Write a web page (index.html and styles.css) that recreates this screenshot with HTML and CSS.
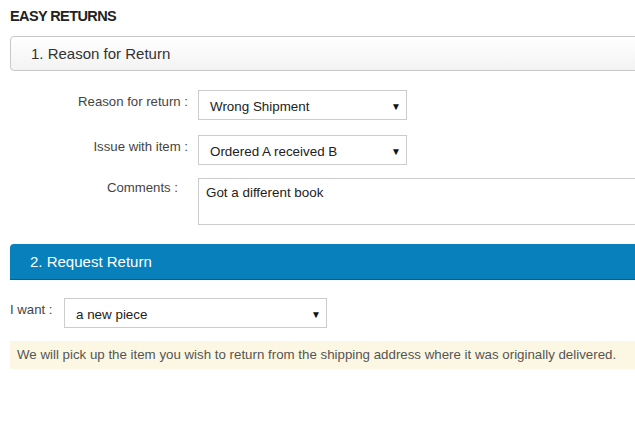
FILE: index.html
```html
<!DOCTYPE html>
<html>
<head>
<meta charset="utf-8">
<link rel="stylesheet" href="styles.css">
</head>
<body>
<div class="page">
  <h1 class="title">EASY RETURNS</h1>
  <div class="panel-head">1. Reason for Return</div>
  <div class="form">
    <div class="row">
      <div class="label">Reason for return :</div>
      <div class="select"><span>Wrong Shipment</span><span class="arrow">▼</span></div>
    </div>
    <div class="row">
      <div class="label">Issue with item :</div>
      <div class="select"><span>Ordered A received B</span><span class="arrow">▼</span></div>
    </div>
    <div class="row">
      <div class="label comments">Comments :</div>
      <div class="textarea">Got a different book</div>
    </div>
  </div>
  <div class="panel-head active">2. Request Return</div>
  <div class="want-row">
    <div class="want-label">I want :</div>
    <div class="select wide"><span>a new piece</span><span class="arrow">▼</span></div>
  </div>
  <div class="notice">We will pick up the item you wish to return from the shipping address where it was originally delivered.</div>
</div>
</body>
</html>
```
FILE: styles.css
```css
html, body { margin: 0; padding: 0; background: #fff; overflow: hidden; }
body { font-family: "Liberation Sans", Arial, sans-serif; color: #333; }
.page { width: 660px; padding: 7px 0 0 10px; }
.title { margin: 0; font-size: 14.5px; letter-spacing: -0.6px; font-weight: bold; color: #222; line-height: 18px; height: 18px; }
.panel-head {
  margin-top: 11px;
  height: 33px; line-height: 33px;
  border: 1px solid #c8c8c8; border-radius: 4px;
  background: linear-gradient(#ffffff, #f3f3f3);
  padding-left: 20px; font-size: 15px; color: #333;
}
.panel-head.active {
  margin-top: 19px; height: 35px; line-height: 35px;
  background: #0880bc; border: none; border-bottom: 1px solid #05608f;
  border-radius: 4px 4px 0 0;
  color: #fff; font-size: 15px;
}
.form { padding-top: 19px; display: flex; flex-direction: column; gap: 15px; }
.row { display: flex; gap: 10px; }
.label { width: 178px; text-align: right; font-size: 13.2px; color: #444; padding-top: 4px; }
.label.comments { padding-top: 0; padding-right: 10px; box-sizing: border-box; }
.select {
  box-sizing: border-box; width: 209px; height: 30px;
  border: 1px solid #ccc; display: flex; align-items: center; justify-content: space-between;
  padding: 2px 5px 0 11px; font-size: 13.4px; color: #222; background: #fff;
}
.arrow { font-size: 10px; color: #111; }
.textarea {
  box-sizing: border-box; flex: 1; height: 47px; margin-top: -2px;
  border: 1px solid #ccc; font-size: 13.4px; color: #222; padding: 6px 7px;
}
.want-row { display: flex; gap: 11px; margin-top: 18px; }
.want-label { width: 43px; font-size: 13.2px; color: #444; padding-top: 4px; white-space: nowrap; }
.select.wide { width: 263px; }
.notice {
  margin-top: 13px; height: 28px; line-height: 28px;
  background: #fcf7e2; padding-left: 7px; font-size: 13.3px; color: #555; white-space: nowrap;
}
```
